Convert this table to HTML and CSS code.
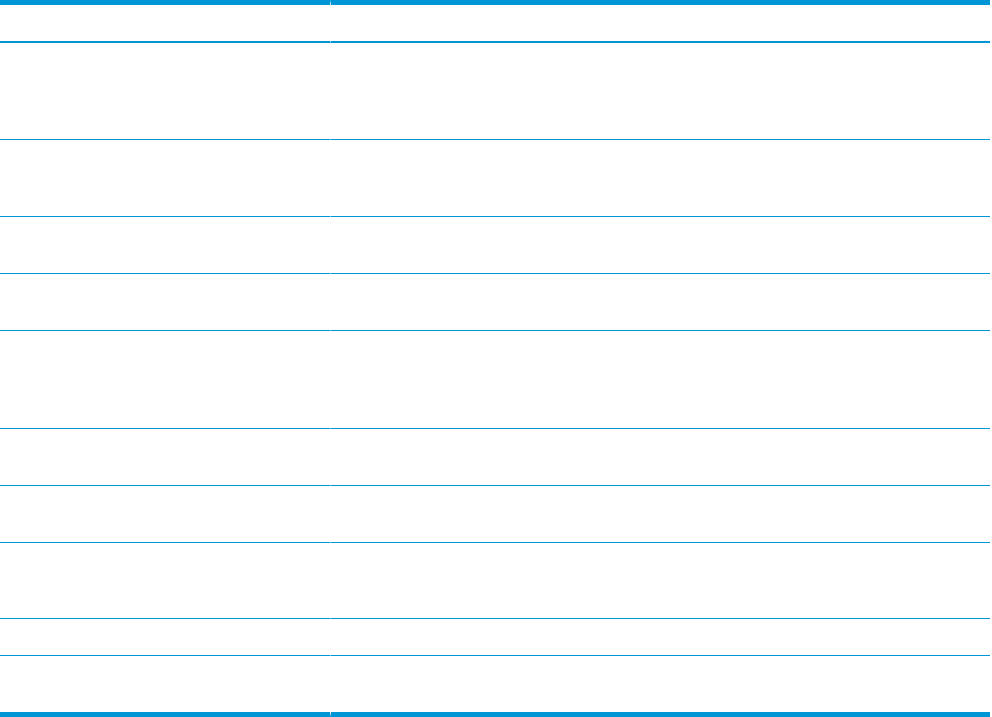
FILE: index.html
```html
<!DOCTYPE html>
<html lang="en">
<head>
<meta charset="utf-8">
<title>Specifications</title>
<link rel="stylesheet" href="styles.css">
</head>
<body>
<div class="spec">
  <div class="cell head"></div><div class="cell head col2"></div>
  <div class="cell h97"></div><div class="cell h97 col2"></div>
  <div class="cell h77"></div><div class="cell h77 col2"></div>
  <div class="cell h57"></div><div class="cell h57 col2"></div>
  <div class="cell h57"></div><div class="cell h57 col2"></div>
  <div class="cell h98"></div><div class="cell h98 col2"></div>
  <div class="cell h57"></div><div class="cell h57 col2"></div>
  <div class="cell h57"></div><div class="cell h57 col2"></div>
  <div class="cell h76"></div><div class="cell h76 col2"></div>
  <div class="cell h37"></div><div class="cell h37 col2"></div>
  <div class="cell last"></div><div class="cell last col2"></div>
</div>
</body>
</html>
```
FILE: styles.css
```css
html, body {
  margin: 0;
  padding: 0;
  background: #ffffff;
  font-family: "Liberation Sans", Arial, sans-serif;
}
.spec {
  width: 990px;
  display: grid;
  grid-template-columns: 330px 660px;
}
.cell {
  box-sizing: border-box;
  border-bottom: 1px solid #0096d6;
}
.col2 {
  border-left: 1px solid transparent;
}
.head {
  height: 43px;
  border-top: 5px solid #0096d6;
  border-bottom: 2px solid #0096d6;
}
.h97 { height: 97px; }
.h77 { height: 77px; }
.h57 { height: 57px; }
.h98 { height: 98px; }
.h76 { height: 76px; }
.h37 { height: 37px; }
.last {
  height: 61px;
  border-bottom: 5px solid #0096d6;
}
```
